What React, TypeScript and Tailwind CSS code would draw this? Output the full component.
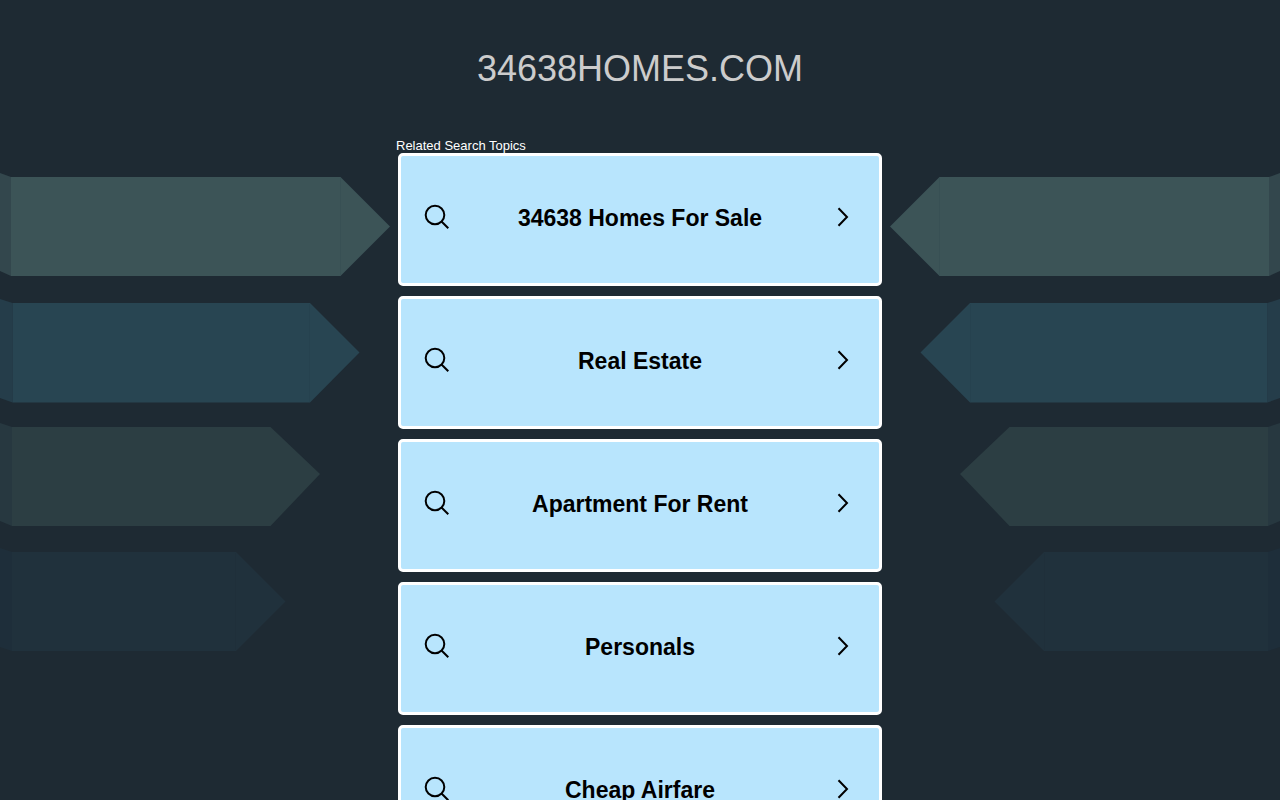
const topics = [
  '34638 Homes For Sale',
  'Real Estate',
  'Apartment For Rent',
  'Personals',
  'Cheap Airfare',
];

function SearchIcon() {
  return (
    <svg viewBox="0 0 26 26" className="size-[26px] shrink-0" fill="none" stroke="#000" strokeWidth="2" aria-hidden="true">
      <circle cx="11" cy="11" r="9.300" />
      <path d="M17.5 17.5 24.300 24.300" />
    </svg>
  );
}

function ChevronIcon() {
  return (
    <svg viewBox="0 0 14 26" className="h-[26px] w-[14px] shrink-0" fill="none" stroke="#000" strokeWidth="2" aria-hidden="true">
      <path d="M2.5 4.2 11 13 2.5 21.8" />
    </svg>
  );
}

function Ribbons() {
  return (
    <g>
      <path fill="#33474d" d="M0 173 11 177V276L0 271Z" />
      <path fill="#3c5457" d="M11 177H340.500L390 226.500 340.500 276H11Z" />
      <path stroke="#385054" d="M340.500 178V275" />
      <path fill="#253d4a" d="M0 299 12.500 303V402.500L0 398Z" />
      <path fill="#284552" d="M12.500 303H310L359.500 352.500 310 402.500H12.500Z" />
      <path stroke="#26424f" d="M309.500 304V402" />
      <path fill="#273840" d="M0 423 12 427V526L0 521Z" />
      <path fill="#2c3e43" d="M12 427H270.500L320 474 270.500 526H12Z" />
      <path fill="#1e2e3a" d="M0 548 12 552V651L0 647Z" />
      <path fill="#20313c" d="M12 552H236L285.500 601.500 236 651H12Z" />
      <path stroke="#1f2f3a" d="M235.500 553V650" />
    </g>
  );
}

function Backdrop() {
  return (
    <svg
      viewBox="0 0 1280 800"
      className="pointer-events-none absolute top-0 left-1/2 h-[800px] w-[1280px] max-w-none -translate-x-1/2"
      aria-hidden="true"
    >
      <Ribbons />
      <g transform="translate(1280 0) scale(-1 1)">
        <Ribbons />
      </g>
    </svg>
  );
}

interface TopicCardProps {
  title: string;
}

function TopicCard({ title }: TopicCardProps) {
  return (
    <a
      href="#"
      className="flex h-[133px] items-center rounded-[5px] border-3 border-white bg-[#b8e5fd] pr-[29px] pb-[3px] pl-[23px] text-black"
    >
      <div className="w-8 pb-[3px]">
        <SearchIcon />
      </div>
      <span className="flex-1 text-center text-[23px] leading-7 font-bold">{title}</span>
      <div className="flex w-[26px] justify-end pb-[3px]">
        <ChevronIcon />
      </div>
    </a>
  );
}

export default function App() {
  return (
    <div className="relative min-h-screen overflow-hidden bg-[#1e2a33] font-['Liberation_Sans',Arial,sans-serif]">
      <Backdrop />
      <header className="relative px-4 pt-[49px] pb-[47px] text-center">
        <h1 className="text-4xl leading-10 text-[#ccc]">34638HOMES.COM</h1>
      </header>
      <main className="relative mx-auto max-w-[488px] pb-10">
        <h2 className="pt-0.5 text-[13px] leading-[15px] text-white">Related Search Topics</h2>
        <ul className="mx-0.5 flex flex-col gap-2.5">
          {topics.map((topic) => (
            <li key={topic}>
              <TopicCard title={topic} />
            </li>
          ))}
        </ul>
      </main>
    </div>
  );
}
